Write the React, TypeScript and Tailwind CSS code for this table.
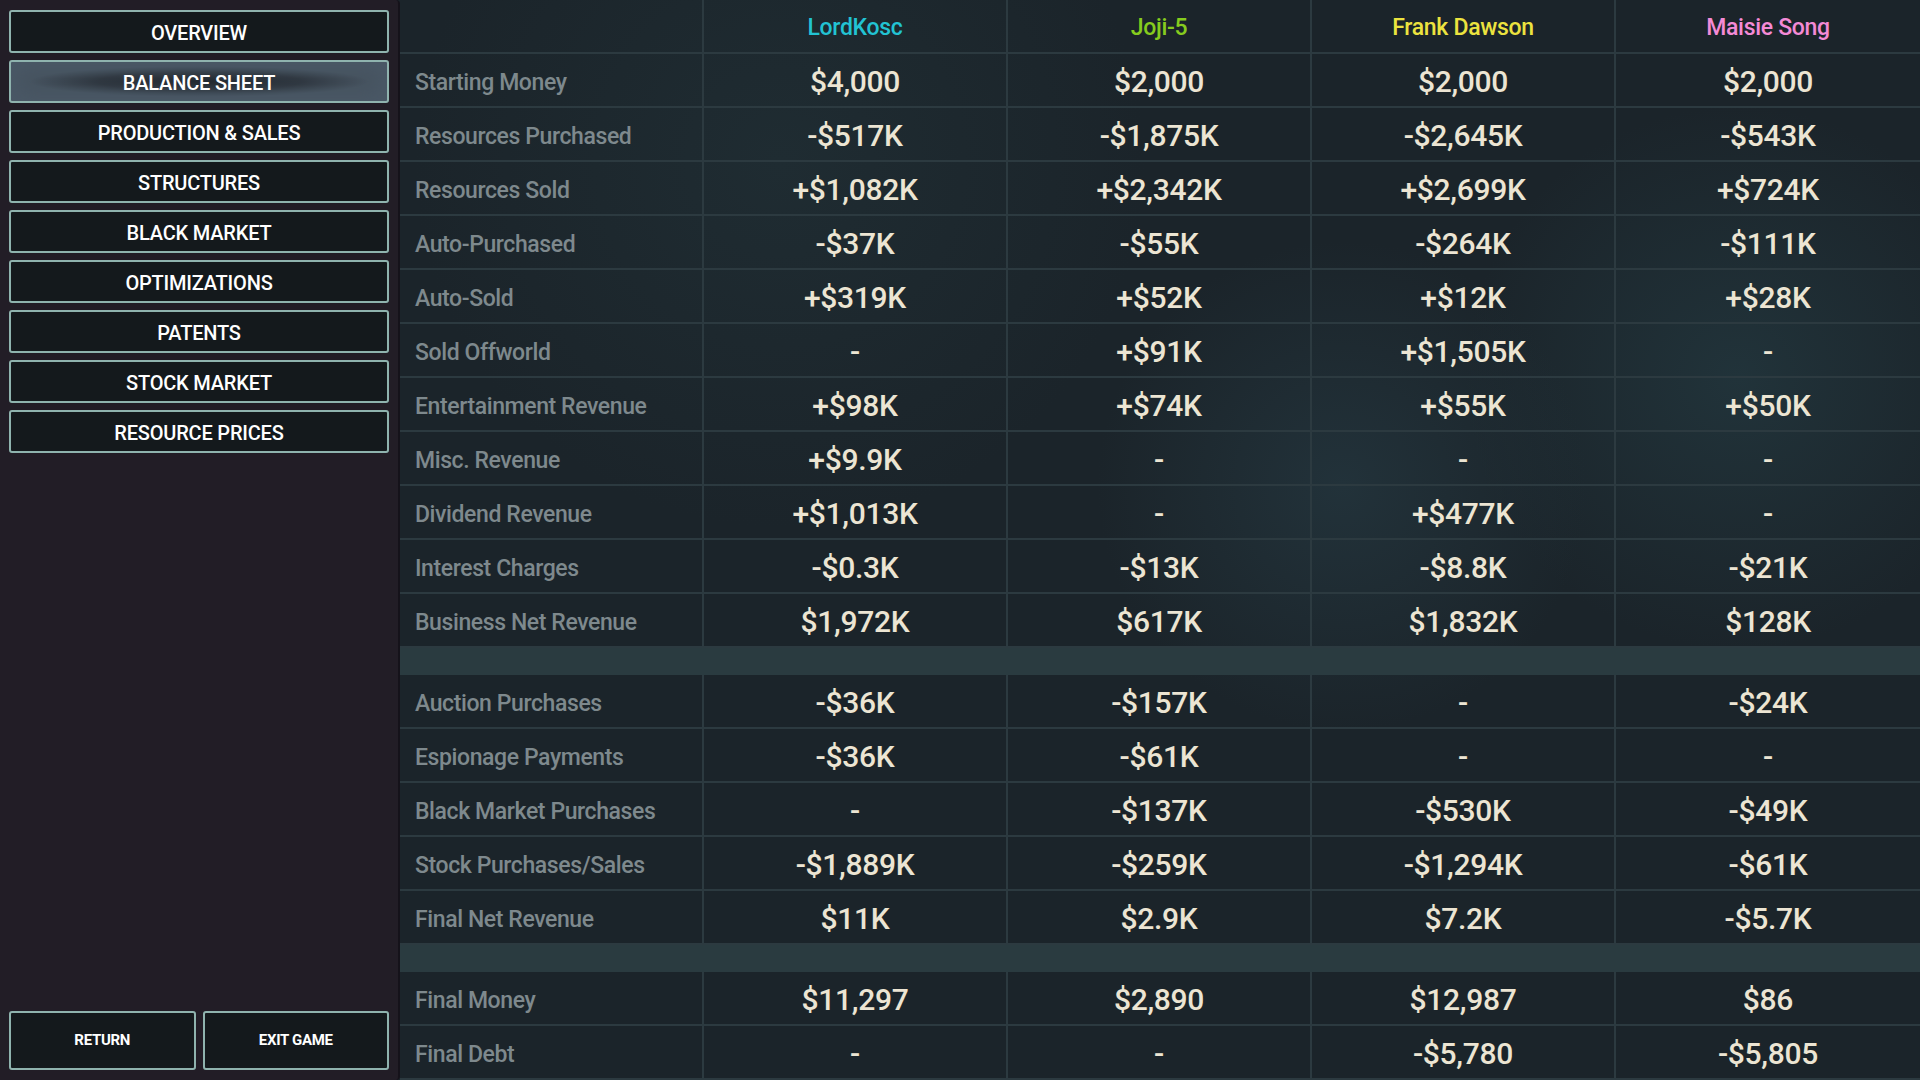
import React from "react";

const players = [
  { name: "LordKosc", color: "text-[#22c3d3]" },
  { name: "Joji-5", color: "text-[#86cc1e]" },
  { name: "Frank Dawson", color: "text-[#ece33f]" },
  { name: "Maisie Song", color: "text-[#f48ad6]" },
];

type Row = { label: string; values: string[] } | "sep";

const rows: Row[] = [
  { label: "Starting Money", values: ["$4,000", "$2,000", "$2,000", "$2,000"] },
  { label: "Resources Purchased", values: ["-$517K", "-$1,875K", "-$2,645K", "-$543K"] },
  { label: "Resources Sold", values: ["+$1,082K", "+$2,342K", "+$2,699K", "+$724K"] },
  { label: "Auto-Purchased", values: ["-$37K", "-$55K", "-$264K", "-$111K"] },
  { label: "Auto-Sold", values: ["+$319K", "+$52K", "+$12K", "+$28K"] },
  { label: "Sold Offworld", values: ["-", "+$91K", "+$1,505K", "-"] },
  { label: "Entertainment Revenue", values: ["+$98K", "+$74K", "+$55K", "+$50K"] },
  { label: "Misc. Revenue", values: ["+$9.9K", "-", "-", "-"] },
  { label: "Dividend Revenue", values: ["+$1,013K", "-", "+$477K", "-"] },
  { label: "Interest Charges", values: ["-$0.3K", "-$13K", "-$8.8K", "-$21K"] },
  { label: "Business Net Revenue", values: ["$1,972K", "$617K", "$1,832K", "$128K"] },
  "sep",
  { label: "Auction Purchases", values: ["-$36K", "-$157K", "-", "-$24K"] },
  { label: "Espionage Payments", values: ["-$36K", "-$61K", "-", "-"] },
  { label: "Black Market Purchases", values: ["-", "-$137K", "-$530K", "-$49K"] },
  { label: "Stock Purchases/Sales", values: ["-$1,889K", "-$259K", "-$1,294K", "-$61K"] },
  { label: "Final Net Revenue", values: ["$11K", "$2.9K", "$7.2K", "-$5.7K"] },
  "sep",
  { label: "Final Money", values: ["$11,297", "$2,890", "$12,987", "$86"] },
  { label: "Final Debt", values: ["-", "-", "-$5,780", "-$5,805"] },
];

const menu = [
  "OVERVIEW",
  "BALANCE SHEET",
  "PRODUCTION & SALES",
  "STRUCTURES",
  "BLACK MARKET",
  "OPTIMIZATIONS",
  "PATENTS",
  "STOCK MARKET",
  "RESOURCE PRICES",
];

function MenuButton({ label, active }: { label: string; active?: boolean }) {
  return (
    <button
      className={
        "h-[43px] w-full rounded-[3px] border-2 border-[#8fb3ae] pt-[2px] text-[20px] font-medium tracking-[-0.2px] text-white " +
        (active
          ? "bg-[#3d4956] shadow-[inset_0_0_18px_8px_#4a5866] bg-[radial-gradient(ellipse_45%_40%_at_50%_50%,#1b2025_0%,#2a3139_60%,#46535f_100%)]"
          : "bg-[#14191c]")
      }
    >
      {label}
    </button>
  );
}

export default function App() {
  return (
    <div
      className="flex h-[1080px] w-[1920px] overflow-hidden bg-[#1b2329]"
      style={{ fontFamily: "Roboto, 'Open Sans', sans-serif" }}
    >
      <aside className="flex h-full w-[400px] shrink-0 flex-col rounded-r-[4px] border-r-2 border-[#15121a] bg-[#221d26] px-[9px] pb-[10px] pt-[10px]">
        <nav className="flex flex-col gap-[7px]">
          {menu.map((m) => (
            <MenuButton key={m} label={m} active={m === "BALANCE SHEET"} />
          ))}
        </nav>
        <div className="mt-auto flex gap-[7px]">
          <button className="h-[59px] flex-1 rounded-[3px] border-2 border-[#8fb3ae] bg-[#14191c] text-[15px] font-bold tracking-[-0.3px] text-white">
            RETURN
          </button>
          <button className="h-[59px] flex-1 rounded-[3px] border-2 border-[#8fb3ae] bg-[#14191c] text-[15px] font-bold tracking-[-0.3px] text-white">
            EXIT GAME
          </button>
        </div>
      </aside>

      <main className="flex-1 bg-[#1b242a] bg-[radial-gradient(circle_at_62%_45%,#22323a_0%,transparent_22%),radial-gradient(circle_at_88%_35%,#21333a_0%,transparent_18%),radial-gradient(circle_at_25%_15%,#1f2c32_0%,transparent_25%)]">
        <div className="grid grid-cols-[304px_repeat(4,1fr)]">
          <div className="h-[54px] border-b-2 border-r-2 border-[#2c3a40]" />
          {players.map((p, i) => (
            <div
              key={p.name}
              className={
                "flex h-[54px] items-center justify-center border-b-2 border-[#2c3a40] pt-[4px] text-[23px] font-medium tracking-[-0.3px] " +
                p.color +
                (i < 3 ? " border-r-2" : "")
              }
            >
              {p.name}
            </div>
          ))}
          {rows.map((r, ri) =>
            r === "sep" ? (
              <div key={ri} className="col-span-5 h-[27px] bg-[#2a3b40]" />
            ) : (
              <React.Fragment key={ri}>
                <div className="flex h-[54px] items-center border-b-2 border-r-2 border-[#2c3a40] pl-[15px] pt-[6px] text-[23px] font-medium tracking-[-0.4px] text-[#7e898d]">
                  {r.label}
                </div>
                {r.values.map((v, i) => (
                  <div
                    key={i}
                    className={
                      "flex h-[54px] items-center justify-center border-b-2 border-[#2c3a40] pt-[3px] text-[30px] font-medium tracking-[-0.3px] text-[#ece5d3]" +
                      (i < 3 ? " border-r-2" : "")
                    }
                  >
                    {v}
                  </div>
                ))}
              </React.Fragment>
            )
          )}
        </div>
      </main>
    </div>
  );
}
